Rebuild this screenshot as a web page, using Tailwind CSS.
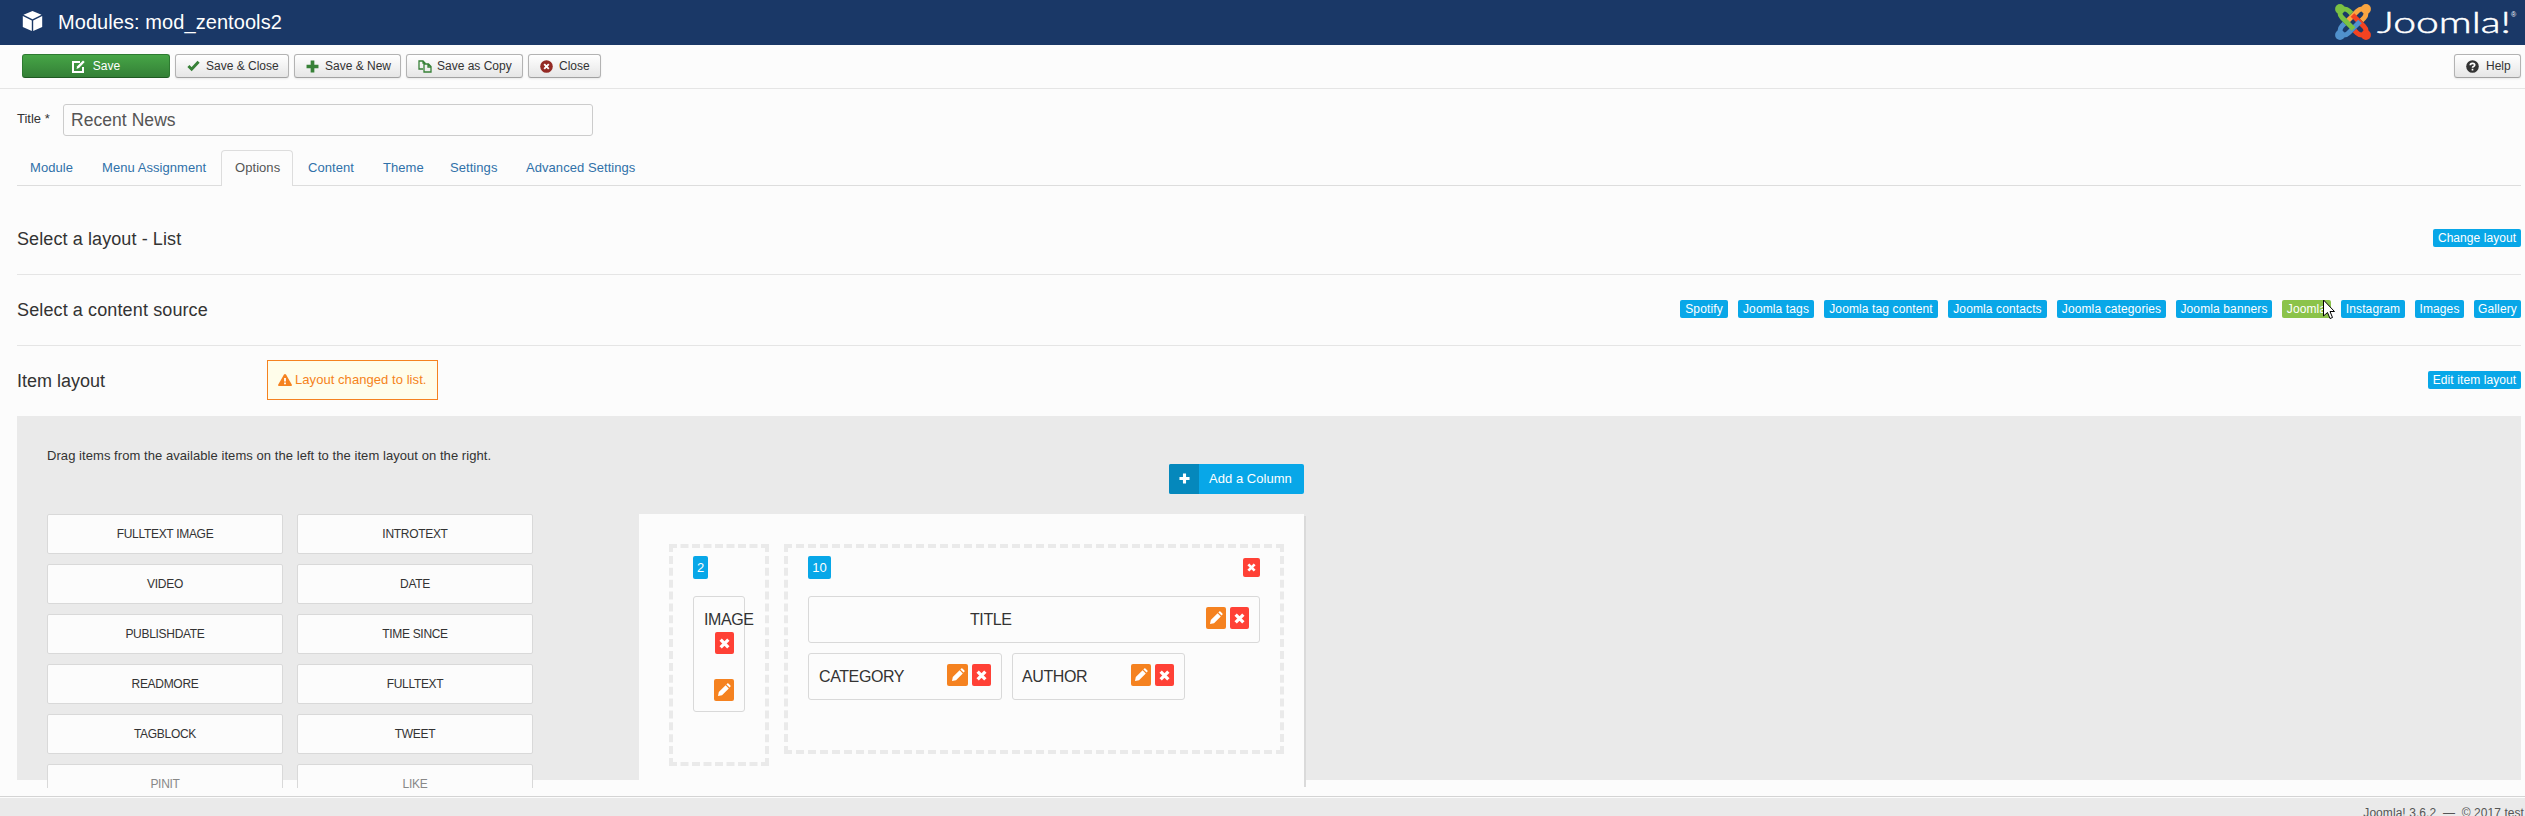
<!DOCTYPE html>
<html lang="en"><head><meta charset="utf-8"><title>Modules: mod_zentools2</title>
<script src="https://cdn.jsdelivr.net/npm/@tailwindcss/browser@4"></script></head>
<body class="w-[2525px] h-[816px] overflow-hidden bg-[#fcfcfc] font-['Liberation_Sans',sans-serif] text-[13px] leading-[18px] text-[#333]">
<svg class="hidden">
  <symbol id="pencil" viewBox="0 0 14 14"><path fill="#fff" d="M1 13l.8-4L8.600 2.200l3.200 3.200L5 12.200zM9.400 1.400l.8-.8q.6-.5 1.200 0l2 2q.5.6 0 1.200l-.8.8z"/></symbol>
  <symbol id="times" viewBox="0 0 12 12"><path fill="none" stroke="#fff" stroke-width="3.600" d="M1.800 1.800l8.400 8.400M10.200 1.800l-8.400 8.400"/></symbol>
  <symbol id="plus" viewBox="0 0 12 12"><path fill="none" stroke="currentColor" stroke-width="3.400" d="M6 .5v11M.5 6h11"/></symbol>
  <symbol id="arm" viewBox="0 0 36 36"><path fill="none" stroke="currentColor" stroke-width="5" d="M5 5v4q0 2.500 2 4.500L18.500 25M5 5h4q3 0 5 2l2.500 2.500"/><circle cx="5" cy="5" r="4.900" fill="currentColor"/></symbol>
</svg>

<header class="flex h-[45px] items-center justify-between bg-[#1a3867] pl-[22px] pr-[7px] text-white">
  <div class="flex items-center">
    <svg class="mb-1 h-[20px] w-[21px]" viewBox="0 0 21 20" fill="#fff"><path d="M10.500 0l9 3.800-9 4.400-9-4.400zM.8 5l9 4.500V20L.8 16zM20.200 5l-9 4.500V20l9-4z"/></svg>
    <h1 class="-mt-[2px] ml-[15px] text-[20px] leading-[30px] tracking-[0.07px]">Modules: mod_zentools2</h1>
  </div>
  <svg class="h-[45px] w-[188px]" viewBox="0 0 188 45">
    <g transform="translate(5 4)">
      <use href="#arm" width="36" height="36" class="text-[#f9a541]" transform="rotate(90 18 18)"/>
      <use href="#arm" width="36" height="36" class="text-[#f44321]" transform="rotate(180 18 18)"/>
      <use href="#arm" width="36" height="36" class="text-[#5091cd]" transform="rotate(270 18 18)"/>
      <use href="#arm" width="36" height="36" class="text-[#7ac143]"/>
    </g>
    <text x="47" y="33" fill="#fff" stroke="#fff" stroke-width=".5" font-family="Lato" font-weight="300" font-size="29" textLength="134" lengthAdjust="spacingAndGlyphs">Joomla!</text>
    <text x="181" y="17" fill="#fff" font-family="Liberation Sans" font-size="7">®</text>
  </svg>
</header>

<div class="flex h-[44px] justify-between border-b border-[#e5e5e5] pl-[22px] pr-1 pt-[9px] text-[12px] leading-[22px]">
  <div class="flex gap-[5px]">
    <button class="flex h-6 w-[148px] items-center justify-center gap-2 rounded-[3px] border border-[#2d7a30] border-b-[#1f5a22] bg-linear-to-b from-[#46a546] to-[#348037] text-white">
      <svg class="h-[13px] w-[13px]" viewBox="0 0 13 13"><path fill="none" stroke="#fff" stroke-width="2" d="M8 2H1v10h10V7"/><path fill="#fff" d="M4.500 9l.7-2.800L11 .4l1.700 1.700L7 8z"/></svg>Save</button>
    <button class="flex h-6 w-[114px] items-center rounded-[3px] border border-[#b3b3b3] border-b-[#a2a2a2] bg-linear-to-b from-white to-[#e6e6e6] pl-[11px] shadow-[0_1px_2px_rgba(0,0,0,.08)]"><svg class="mr-[6px] h-[12px] w-[13px]" viewBox="0 0 13 13"><path fill="none" stroke="#378137" stroke-width="3.200" d="M1 6.500l3.500 3.500L12 2"/></svg>Save &amp; Close</button>
    <button class="flex h-6 w-[107px] items-center rounded-[3px] border border-[#b3b3b3] border-b-[#a2a2a2] bg-linear-to-b from-white to-[#e6e6e6] pl-[11px] shadow-[0_1px_2px_rgba(0,0,0,.08)]"><svg class="mr-[6px] h-[13px] w-[13px] text-[#378137]"><use href="#plus"/></svg>Save &amp; New</button>
    <button class="flex h-6 w-[117px] items-center rounded-[3px] border border-[#b3b3b3] border-b-[#a2a2a2] bg-linear-to-b from-white to-[#e6e6e6] pl-[11px] shadow-[0_1px_2px_rgba(0,0,0,.08)]"><svg class="mr-[5px] h-[13px] w-[14px]" viewBox="0 0 14 13" fill="none" stroke="#378137" stroke-width="1.300"><path d="M5 9H1V1h4l2 2v1M5 1v2h2M6 4h4.500L13 6.500V12H6zM10 4v3h3"/></svg>Save as Copy</button>
    <button class="flex h-6 w-[73px] items-center rounded-[3px] border border-[#b3b3b3] border-b-[#a2a2a2] bg-linear-to-b from-white to-[#e6e6e6] pl-[11px] shadow-[0_1px_2px_rgba(0,0,0,.08)]"><svg class="mr-[6px] h-[13px] w-[13px]" viewBox="0 0 13 13"><circle cx="6.500" cy="6.500" r="6.300" fill="#942a25"/><path stroke="#fff" stroke-width="1.900" d="M4.200 4.200l4.600 4.600M8.800 4.200L4.200 8.800"/></svg>Close</button>
  </div>
  <button class="flex h-6 w-[67px] items-center rounded-[3px] border border-[#b3b3b3] border-b-[#a2a2a2] bg-linear-to-b from-white to-[#e6e6e6] pl-[11px] shadow-[0_1px_2px_rgba(0,0,0,.08)]"><svg class="mr-[7px] h-[13px] w-[13px]" viewBox="0 0 13 13"><circle cx="6.500" cy="6.500" r="6.300" fill="#333"/><path fill="none" stroke="#fff" stroke-width="1.700" d="M4.300 5.300q0-2 2.200-2t2.200 1.700q0 1-1.200 1.500-1 .4-1 1.300M6.500 8.800v1.600"/></svg>Help</button>
</div>

<main class="pl-[17px] pr-1">
  <div class="flex pt-[15px]"><label class="w-[46px] pt-[6px]">Title *</label><div class="h-8 w-[530px] rounded-[3px] border border-[#ccc] bg-[#fcfcfc] pl-[7px] text-[17.500px] leading-[30px] tracking-[0.05px] text-[#555]">Recent News</div></div>
  <nav class="mt-[14px] flex h-9 border-b border-[#ddd] text-[#3071a9] leading-[35px] tracking-[0.06px]">
    <a class="w-[72px] pl-[13px]">Module</a><a class="w-[132px] pl-[13px]">Menu Assignment</a>
    <a class="-mb-px h-9 w-[72px] rounded-t-[4px] border border-b-0 border-[#ddd] bg-[#fcfcfc] pl-[13px] text-[#555] leading-[33px]">Options</a>
    <a class="w-[75px] pl-[15px]">Content</a><a class="w-[68px] pl-[15px]">Theme</a><a class="w-[75px] pl-[14px]">Settings</a><a class="pl-[15px]">Advanced Settings</a>
  </nav>

  <section class="flex h-[89px] justify-between border-b border-[#e5e5e5] pt-[43px]">
    <h2 class="-mt-[1px] text-[18px] leading-[22px] tracking-[0.1px]">Select a layout - List</h2>
    <a class="h-[18px] w-[88px] rounded-[2px] bg-[#08a7e8] text-center text-[12px] tracking-[0.06px] text-white">Change layout</a>
  </section>
  <section class="flex h-[71px] justify-between border-b border-[#e5e5e5] pt-[25px]">
    <h2 class="-mt-[1px] text-[18px] leading-[22px] tracking-[0.12px]">Select a content source</h2>
    <div class="relative flex gap-[10px] text-center text-[12px] tracking-[0.12px] text-white *:h-[18px] *:rounded-[2px]">
      <a class="w-[48px] bg-[#08a7e8]">Spotify</a><a class="w-[76px] bg-[#08a7e8]">Joomla tags</a><a class="w-[114px] bg-[#08a7e8]">Joomla tag content</a><a class="w-[99px] bg-[#08a7e8]">Joomla contacts</a><a class="w-[109px] bg-[#08a7e8]">Joomla categories</a><a class="w-[96px] bg-[#08a7e8]">Joomla banners</a><a class="w-[49px] bg-[#8bc34a]">Joomla</a><a class="w-[64px] bg-[#08a7e8]">Instagram</a><a class="w-[49px] bg-[#08a7e8]">Images</a><a class="w-[47px] bg-[#08a7e8]">Gallery</a>
      <svg class="absolute -top-px right-[186px] !h-[21px] w-3" viewBox="0 0 12 21"><path fill="#fff" stroke="#000" d="M.5 1v16l4-3.500 2.500 6 2.500-1-2.500-6h4.500z"/></svg>
    </div>
  </section>
  <section class="flex h-[70px] items-start pt-[14px]">
    <h2 class="w-[250px] pt-[10px] text-[18px] leading-[22px]">Item layout</h2>
    <div class="flex h-10 w-[171px] items-center whitespace-nowrap border border-[#f58220] bg-[#fffdea] pl-[10px] tracking-[0.06px] text-[#f58220]"><svg class="mr-[3px] h-3 w-[14px]" viewBox="0 0 14 12"><path fill="#f58220" d="M6 .6q1-1.200 2 0l6 10.400q0 1-1 1H1q-1 0-1-1z"/><path stroke="#fff" stroke-width="1.800" d="M7 4v3.500M7 8.500v1.700"/></svg>Layout changed to list.</div>
    <a class="ml-auto mt-[11px] h-[18px] w-[93px] rounded-[2px] bg-[#08a7e8] text-center text-[12px] tracking-[0.1px] text-white">Edit item layout</a>
  </section>

  <section class="flex h-[364px] bg-[#eaeaea] pl-[30px]">
    <div class="h-[372px] w-[592px] shrink-0 overflow-hidden pt-[31px]">
      <p class="tracking-[0.06px]">Drag items from the available items on the left to the item layout on the right.</p>
      <div class="mt-[49px] grid w-[486px] grid-cols-2 gap-x-[14px] gap-y-[10px] text-center text-[12px] leading-[38px] tracking-[-0.3px] *:h-10 *:rounded-[2px] *:border *:border-[#d9d9d9] *:bg-[#fcfcfc]">
        <div>FULLTEXT IMAGE</div><div>INTROTEXT</div><div>VIDEO</div><div>DATE</div><div>PUBLISHDATE</div><div>TIME SINCE</div><div>READMORE</div><div>FULLTEXT</div><div>TAGBLOCK</div><div>TWEET</div><div class="text-[#888]">PINIT</div><div class="text-[#888]">LIKE</div>
      </div>
    </div>
    <div class="flex w-[667px] flex-col pt-12">
      <a class="ml-auto mr-[2px] flex h-[30px] w-[135px] shrink-0 overflow-hidden rounded-[2px] bg-[#08a7e8] leading-[30px] text-white"><span class="flex w-[30px] items-center justify-center bg-[#0588bc]"><svg class="mb-[2px] h-[11px] w-[11px]"><use href="#plus"/></svg></span><span class="flex-1 pl-[10px] tracking-[0.04px]">Add a Column</span></a>
      <div class="mt-5 flex h-[273px] w-[665px] shrink-0 items-start gap-[15px] bg-[#fcfcfc] pl-[30px] pt-[30px] text-[16px] tracking-[-0.4px] shadow-[2px_2px_0_#dadada] [clip-path:inset(0_-2px_0_0)]">
        <div class="h-[222px] w-[100px] border-4 border-dashed border-[#eaeaea] pl-5 pt-2">
          <span class="block h-[23px] w-[15px] rounded-[2px] bg-[#08a7e8] text-center text-[13px] leading-[23px] tracking-normal text-white">2</span>
          <div class="mt-[17px] flex h-[116px] w-[52px] flex-col items-end rounded-[3px] border border-[#d9d9d9] pr-[10px] pt-[14px]">
            <span class="-mr-[19px] w-[49px] leading-[18px]">IMAGE</span>
            <span class="mt-[3px] flex h-[22px] w-[19px] items-center justify-center rounded-[2px] bg-[#ff4136]"><svg class="h-[11px] w-[11px]"><use href="#times"/></svg></span>
            <span class="mt-[25px] flex h-[22px] w-5 items-center justify-center rounded-[2px] bg-[#f58220]"><svg class="h-[14px] w-[14px]"><use href="#pencil"/></svg></span>
          </div>
        </div>
        <div class="h-[210px] w-[500px] border-4 border-dashed border-[#eaeaea] px-5 pt-2">
          <div class="flex justify-between"><span class="h-[23px] w-[23px] rounded-[2px] bg-[#08a7e8] text-center text-[13px] leading-[23px] tracking-normal text-white">10</span><span class="mt-[2px] flex h-[19px] w-[17px] items-center justify-center rounded-[2px] bg-[#ff4136]"><svg class="h-[9px] w-[9px]"><use href="#times"/></svg></span></div>
          <div class="mt-[17px] flex h-[47px] items-start rounded-[3px] border border-[#d9d9d9] pl-[161px] pr-[10px] pt-[10px]"><span class="mr-auto leading-[26px]">TITLE</span><span class="flex h-[22px] w-5 items-center justify-center rounded-[2px] bg-[#f58220]"><svg class="h-[14px] w-[14px]"><use href="#pencil"/></svg></span><span class="ml-1 flex h-[22px] w-[19px] items-center justify-center rounded-[2px] bg-[#ff4136]"><svg class="h-[11px] w-[11px]"><use href="#times"/></svg></span></div>
          <div class="mt-[10px] flex gap-[10px]">
            <div class="flex h-[47px] w-[194px] items-start rounded-[3px] border border-[#d9d9d9] px-[10px] pt-[10px]"><span class="mr-auto leading-[26px]">CATEGORY</span><span class="flex h-[22px] w-[21px] items-center justify-center rounded-[2px] bg-[#f58220]"><svg class="h-[14px] w-[14px]"><use href="#pencil"/></svg></span><span class="ml-1 flex h-[22px] w-[19px] items-center justify-center rounded-[2px] bg-[#ff4136]"><svg class="h-[11px] w-[11px]"><use href="#times"/></svg></span></div>
            <div class="flex h-[47px] w-[173px] items-start rounded-[3px] border border-[#d9d9d9] px-[10px] pt-[10px]"><span class="-ml-px mr-auto leading-[26px]">AUTHOR</span><span class="flex h-[22px] w-5 items-center justify-center rounded-[2px] bg-[#f58220]"><svg class="h-[14px] w-[14px]"><use href="#pencil"/></svg></span><span class="ml-1 flex h-[22px] w-[19px] items-center justify-center rounded-[2px] bg-[#ff4136]"><svg class="h-[11px] w-[11px]"><use href="#times"/></svg></span></div>
          </div>
        </div>
      </div>
    </div>
  </section>
</main>
<footer class="mt-4 flex h-5 justify-end overflow-hidden border-t border-[#d4d4d4] bg-[#eaeaea] pt-[7px] pr-px text-[12px] tracking-[0.06px] text-[#555] shadow-[inset_0_1px_0_#fcfcfc]"><span class="whitespace-pre">Joomla! 3.6.2  —  © 2017 test</span></footer>
</body></html>
